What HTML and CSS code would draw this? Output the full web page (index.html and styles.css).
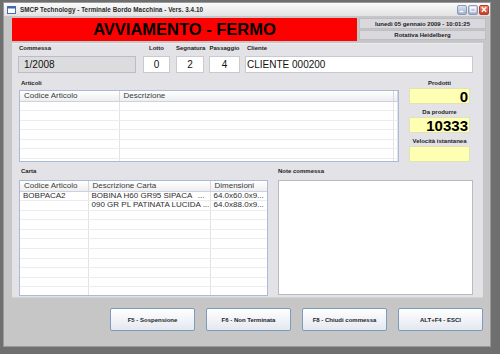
FILE: index.html
```html
<!DOCTYPE html>
<html lang="it">
<head>
  <meta charset="UTF-8">
  <title>Terminale Bordo Macchina</title>
  <link rel="stylesheet" href="styles.css">
</head>
<body>

  <div class="window">
    <div class="titlebar">
      <svg class="app-icon" width="9" height="8" viewBox="0 0 9 8">
        <rect x="0.5" y="0.5" width="8" height="7" fill="#fff" stroke="#4a6ea8"/>
        <rect x="0.5" y="0.5" width="8" height="2" fill="#3c64b4"/>
      </svg>
      <span class="title">SMCP Technology - Terminale Bordo Macchina - Vers. 3.4.10</span>
      <div class="win-btns">
        <span class="wbtn"><svg width="9" height="9" viewBox="0 0 9 9"><rect x="2" y="6" width="4" height="1.5" fill="#fff"/></svg></span>
        <span class="wbtn"><svg width="9" height="9" viewBox="0 0 9 9"><rect x="2" y="2" width="5" height="5" fill="none" stroke="#fff" stroke-width="1"/><rect x="2" y="2" width="5" height="1.5" fill="#fff"/></svg></span>
        <span class="wbtn close"><svg width="9" height="9" viewBox="0 0 9 9"><path d="M2 2 L7 7 M7 2 L2 7" stroke="#fff" stroke-width="1.6"/></svg></span>
      </div>
    </div>

    <div class="client">
      <div class="header">
        <div class="banner">AVVIAMENTO - FERMO</div>
        <div class="info">
          <div class="info-row">lunedì 05 gennaio 2009 - 10:01:25</div>
          <div class="info-row second">Rotativa Heidelberg</div>
        </div>
      </div>

      <div class="panel">
        <div class="fields">
          <div class="field commessa">
            <div class="label">Commessa</div>
            <div class="box disabled">1/2008</div>
          </div>
          <div class="field lotto">
            <div class="label">Lotto</div>
            <div class="box">0</div>
          </div>
          <div class="field segnatura">
            <div class="label">Segnatura</div>
            <div class="box">2</div>
          </div>
          <div class="field passaggio">
            <div class="label">Passaggio</div>
            <div class="box">4</div>
          </div>
          <div class="field cliente">
            <div class="label">Cliente</div>
            <div class="box">CLIENTE 000200</div>
          </div>
        </div>

        <div class="middle">
          <div class="articoli">
            <div class="caption">Articoli</div>
            <div class="grid-wrap articoli-grid">
              <table class="grid">
                <colgroup><col style="width:99px"><col><col style="width:4px"></colgroup>
                <thead><tr><th>Codice Articolo</th><th>Descrizione</th><th></th></tr></thead>
                <tbody>
                  <tr><td></td><td></td><td></td></tr>
                  <tr><td></td><td></td><td></td></tr>
                  <tr><td></td><td></td><td></td></tr>
                  <tr><td></td><td></td><td></td></tr>
                  <tr><td></td><td></td><td></td></tr>
                  <tr><td></td><td></td><td></td></tr>
                  <tr><td></td><td></td><td></td></tr>
                </tbody>
              </table>
            </div>
          </div>

          <div class="counters">
            <div class="counter">
              <div class="label">Prodotti</div>
              <div class="count">0</div>
            </div>
            <div class="counter">
              <div class="label">Da produrre</div>
              <div class="count">10333</div>
            </div>
            <div class="counter">
              <div class="label">Velocità istantanea</div>
              <div class="count tall"></div>
            </div>
          </div>
        </div>

        <div class="bottom">
          <div class="carta">
            <div class="caption">Carta</div>
            <div class="grid-wrap carta-grid">
              <table class="grid">
                <colgroup><col style="width:68px"><col style="width:122px"><col style="width:57px"><col></colgroup>
                <thead><tr><th>Codice Articolo</th><th>Descrizione Carta</th><th>Dimensioni</th><th></th></tr></thead>
                <tbody>
                  <tr><td>BOBPACA2</td><td><span class="split"><span>BOBINA H60 GR95 SIPACA</span><span>...</span></span></td><td>64.0x60.0x9...</td><td></td></tr>
                  <tr><td></td><td>090 GR PL PATINATA LUCIDA ...</td><td>64.0x88.0x9...</td><td></td></tr>
                  <tr><td></td><td></td><td></td><td></td></tr>
                  <tr><td></td><td></td><td></td><td></td></tr>
                  <tr><td></td><td></td><td></td><td></td></tr>
                  <tr><td></td><td></td><td></td><td></td></tr>
                  <tr><td></td><td></td><td></td><td></td></tr>
                  <tr><td></td><td></td><td></td><td></td></tr>
                  <tr><td></td><td></td><td></td><td></td></tr>
                  <tr><td></td><td></td><td></td><td></td></tr>
                  <tr><td></td><td></td><td></td><td></td></tr>
                </tbody>
              </table>
            </div>
          </div>

          <div class="note">
            <div class="caption">Note commessa</div>
            <div class="note-box"></div>
          </div>
        </div>
      </div>

      <div class="actions">
        <button class="btn">F5 - Sospensione</button>
        <button class="btn">F6 - Non Terminata</button>
        <button class="btn">F8 - Chiudi commessa</button>
        <button class="btn last">ALT+F4 - ESCI</button>
      </div>
    </div>
  </div>

</body>
</html>
```

FILE: styles.css
```css
* {
  margin: 0;
  padding: 0;
  box-sizing: border-box;
  font-family: 'Liberation Sans', Arial, sans-serif;
}

body {
  background: #6f6f6f;
  width: 500px;
  height: 354px;
  overflow: hidden;
}

.window {
  margin: 2px 0 0 3px;
  width: 488px;
  height: 345px;
  background: #c6c6c6;
  border: 1px solid #9a9a9a;
  display: flex;
  flex-direction: column;
}

/* title bar */

.titlebar {
  height: 13px;
  background: linear-gradient(to bottom, #fbfbfb, #e2e2e4);
  display: flex;
  align-items: center;
  padding-left: 3px;
}

.app-icon {
  margin-right: 4px;
}

.title {
  font-size: 6.3px;
  font-weight: bold;
  color: #2a2a2a;
  letter-spacing: 0.05px;
}

.win-btns {
  margin-left: auto;
  display: flex;
  gap: 1px;
  padding-right: 1px;
}

.wbtn {
  width: 10px;
  height: 10px;
  border: 1px solid #8a9ab8;
  border-radius: 2px;
  background: linear-gradient(to bottom, #dde4f0, #9fb0cc);
  display: flex;
  align-items: center;
  justify-content: center;
}

.wbtn.close {
  border-color: #b04030;
  background: linear-gradient(to bottom, #f08870, #d03820);
}

/* client area */

.client {
  flex: 1;
  padding: 2px 4px 0 8px;
}

.header {
  display: flex;
  height: 23px;
}

.banner {
  width: 345px;
  background: #ff0000;
  color: #000;
  font-size: 16.5px;
  font-weight: bold;
  display: flex;
  align-items: center;
  justify-content: center;
}

.info {
  margin-left: 2px;
  width: 127px;
  display: flex;
  flex-direction: column;
  gap: 1px;
}

.info-row {
  height: 11px;
  background: #d9d9dd;
  border: 1px solid #bdbdc2;
  font-size: 6px;
  font-weight: bold;
  color: #222;
  display: flex;
  align-items: center;
  justify-content: center;
}

.info-row.second {
  height: 10px;
}

/* main panel */

.panel {
  margin-top: 2px;
  width: 471px;
  height: 255px;
  background: #e2e2e7;
  border-top: 1px solid #ececf0;
  border-bottom: 1px solid #d2d2d6;
  padding: 0 10px 0 6px;
}

.label,
.caption {
  font-size: 6px;
  font-weight: bold;
  color: #222;
  height: 9px;
  line-height: 9px;
  white-space: nowrap;
}

.fields {
  display: flex;
}

.field .label {
  margin-bottom: 3px;
  text-align: center;
}

.box {
  height: 17px;
  background: #fff;
  border: 1px solid #c9c9d0;
  font-size: 10px;
  color: #111;
  display: flex;
  align-items: center;
  justify-content: center;
}

.box.disabled {
  background: #dcdcde;
  border-color: #bcbcc2;
}

.commessa { width: 118px; }
.commessa .label { text-align: left; padding-left: 1px; }
.commessa .box { justify-content: flex-start; padding-left: 5px; }

.lotto { width: 27px; margin-left: 7px; }
.segnatura { width: 28px; margin-left: 6px; }
.passaggio { width: 31px; margin-left: 5px; }

.cliente { flex: 1; margin-left: 5px; }
.cliente .label { text-align: left; padding-left: 2px; }
.cliente .box { justify-content: flex-start; padding-left: 1px; }

.middle {
  display: flex;
  margin-top: 6px;
}

.articoli {
  width: 380px;
  margin-left: 1px;
}

.caption {
  padding-left: 2px;
  margin-bottom: 2px;
}

.grid-wrap {
  background: #fff;
  border: 1px solid #a9bcd3;
  overflow: hidden;
}

.articoli-grid { height: 72px; }
.carta-grid { height: 116px; }

.grid {
  width: 100%;
  table-layout: fixed;
  border-collapse: collapse;
}

.grid th {
  height: 10px;
  background: linear-gradient(to bottom, #ffffff, #eeeef0);
  border-right: 1px solid #d6d6da;
  border-bottom: 1px solid #cad3df;
  font-size: 8px;
  font-weight: normal;
  color: #3a3a3a;
  text-align: left;
  padding: 0 0 0 4px;
  white-space: nowrap;
  overflow: hidden;
  line-height: 9px;
}

.grid td {
  height: 9.6px;
  border-right: 1px solid #e3e3e6;
  border-bottom: 1px solid #ececee;
  font-size: 8px;
  color: #2e2e2e;
  padding: 0 3px;
  white-space: nowrap;
  overflow: hidden;
  line-height: 8px;
}

.split {
  display: flex;
  justify-content: space-between;
  padding-right: 2px;
}

/* counters */

.counters {
  width: 61px;
  margin-left: 10px;
  display: flex;
  flex-direction: column;
  gap: 4px;
}

.counter .label {
  text-align: center;
}

.count {
  height: 16px;
  background: #ffffb4;
  border: 1px solid #e2e2b8;
  font-size: 15px;
  font-weight: bold;
  color: #000;
  text-align: right;
  padding-right: 1px;
  line-height: 15px;
}

.count.tall {
  height: 16px;
}

/* bottom */

.bottom {
  display: flex;
  margin-top: 5px;
}

.carta {
  width: 249px;
  margin-left: 1px;
}

.carta .caption,
.note .caption {
  margin-bottom: 4px;
}

.note {
  width: 195px;
  margin-left: 10px;
}

.note .caption {
  padding-left: 0;
}

.note-box {
  height: 115px;
  background: #fff;
  border: 1px solid #b9b9c0;
}

/* action buttons */

.actions {
  display: flex;
  justify-content: flex-end;
  gap: 11px;
  margin-top: 10px;
  padding-right: 3px;
}

.btn {
  width: 85px;
  height: 23px;
  border: 1px solid #7d9bbb;
  border-radius: 2px;
  background: linear-gradient(to bottom, #ffffff, #e3e8f0);
  font-size: 6px;
  font-weight: bold;
  color: #1e1e1e;
  cursor: pointer;
}
```
